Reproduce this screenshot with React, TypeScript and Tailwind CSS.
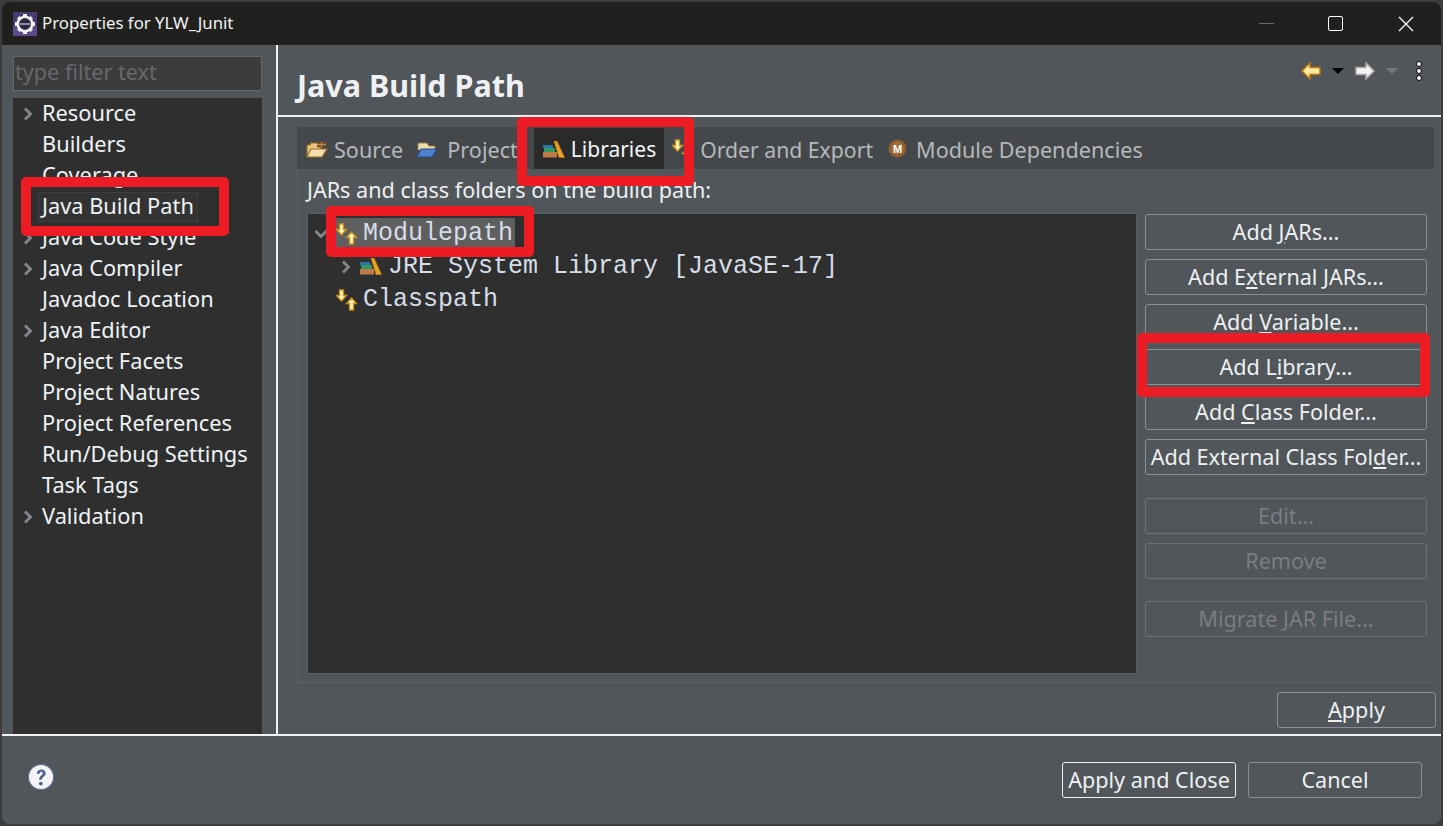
import type { ReactNode } from "react"

const sans = "font-['Noto_Sans','Open_Sans',sans-serif]"

const treeItems = [
  { label: "Resource", arrow: true },
  { label: "Builders" },
  { label: "Coverage" },
  { label: "Java Build Path", selected: true },
  { label: "Java Code Style", arrow: true },
  { label: "Java Compiler", arrow: true },
  { label: "Javadoc Location" },
  { label: "Java Editor", arrow: true },
  { label: "Project Facets" },
  { label: "Project Natures" },
  { label: "Project References" },
  { label: "Run/Debug Settings" },
  { label: "Task Tags" },
  { label: "Validation", arrow: true },
]

function Chevron({ down = false }: { down?: boolean }) {
  return (
    <svg width="12" height="14" viewBox="0 0 12 14" className={down ? "rotate-90" : ""}>
      <path d="M3 1.500l5.500 5.500L3 12.500" fill="none" stroke="#85888a" strokeWidth="2.800" />
    </svg>
  )
}

function AppIcon() {
  return (
    <svg width="24" height="24" viewBox="0 0 24 24">
      <rect width="24" height="24" fill="#4a3a72" />
      <rect x="0" y="14" width="24" height="10" fill="#5c4a8c" />
      <path d="M10 2h4v3h-4zM10 19h4v3h-4zM2 10h3v4H2zM19 10h3v4h-3zM4 6.500L6.500 4 9 6.500 6.500 9zM15 6.500L17.500 4 20 6.500 17.500 9zM4 17.500L6.500 15 9 17.500 6.500 20zM15 17.500L17.500 15 20 17.500 17.500 20z" fill="#f0f0f0" />
      <circle cx="12" cy="12" r="7.200" fill="none" stroke="#f0f0f0" strokeWidth="2.800" />
      <circle cx="12" cy="12" r="5.800" fill="#2e2a3c" />
      <rect x="6.500" y="11" width="11" height="2" fill="#8f8aa8" />
    </svg>
  )
}

function BooksIcon() {
  return (
    <svg width="22" height="17" viewBox="0 0 22 17" className="shrink-0">
      <rect x="0" y="4" width="10" height="3" fill="#2c74a8" />
      <rect x="1" y="7" width="11" height="4" fill="#2f9a66" />
      <rect x="0" y="11" width="14" height="5.500" fill="#c07a45" />
      <path d="M11 0h3l7.500 16.500H16z" fill="#e3a526" stroke="#c8701a" strokeWidth="0.800" />
    </svg>
  )
}

function SortIcon() {
  return (
    <svg width="24" height="22" viewBox="0 0 24 22" className="shrink-0">
      <path d="M3.500 1h4v5.500h3L5.500 12 .5 6.500h3z" fill="#fff2bd" stroke="#c8921a" strokeWidth="1.300" />
      <path d="M15.500 9l5 5.500h-3V21h-4v-6.500h-3z" fill="#fff2bd" stroke="#c8921a" strokeWidth="1.300" />
    </svg>
  )
}

function SourceFolderIcon() {
  return (
    <svg width="22" height="18" viewBox="0 0 22 18" className="shrink-0">
      <path d="M1 16V4h3l1-2h7v4h3v2" fill="#e9c67c" stroke="#9a6a28" strokeWidth="1.200" />
      <path d="M1 16l4-8h16l-5 8z" fill="#f3dfae" stroke="#9a6a28" strokeWidth="1.200" />
      <rect x="11" y="1" width="9" height="5" fill="#7a4f2a" />
      <path d="M15.500 1v5M11 3.500h9" stroke="#c9a06a" strokeWidth="0.800" />
    </svg>
  )
}

function ProjectFolderIcon() {
  return (
    <svg width="22" height="18" viewBox="0 0 22 18" className="shrink-0">
      <path d="M2 9V2h9l2 3h6v4" fill="#f0dfa8" stroke="#8a7a50" strokeWidth="1" />
      <path d="M1 16l4-8h16l-5 8z" fill="#4f7fd0" stroke="#274a8a" strokeWidth="1.200" />
    </svg>
  )
}

function ModuleIcon() {
  return (
    <svg width="19" height="19" viewBox="0 0 19 19" className="mb-[4px] shrink-0">
      <circle cx="9.500" cy="9.500" r="9" fill="#8f5f30" />
      <circle cx="9.500" cy="9.500" r="6.500" fill="#a06c38" />
      <text x="9.500" y="13.500" textAnchor="middle" fontSize="11" fontWeight="700" fill="#fff" fontFamily="Liberation Sans, sans-serif">M</text>
    </svg>
  )
}

function HelpIcon() {
  return (
    <svg width="28" height="28" viewBox="0 0 30 30" className="mb-[6px]">
      <circle cx="15" cy="15" r="13.500" fill="#f4f4f6" stroke="#5a6c96" strokeWidth="1.200" />
      <path d="M10.500 11.500c0-6 9.500-6 9.500-.5 0 3.500-4 3.500-4 7h-3c0-4.500 3.800-4.500 3.800-7 0-2.200-3.300-2-3.300.5z" fill="#4d5f8a" />
      <circle cx="14.800" cy="22" r="2" fill="#4d5f8a" />
    </svg>
  )
}

function PushButton({ children, disabled, focused, className = "" }: { children: ReactNode; disabled?: boolean; focused?: boolean; className?: string }) {
  return (
    <div
      className={`flex h-9 items-center justify-center whitespace-nowrap rounded-[3px] border text-[21.6px] leading-none ${
        disabled ? "border-[#6e7275] text-[#7a7e81]" : focused ? "border-[#f0f0f0] text-[#eef0f2]" : "border-[#8b8f92] text-[#eef0f2]"
      } ${className}`}
    >
      <span>{children}</span>
    </div>
  )
}

function RedBox({ className }: { className: string }) {
  return <div className={`pointer-events-none absolute rounded-[5px] border-[10px] border-[#ed1c24] ${className}`} />
}

export default function App() {
  return (
    <div className={`relative flex h-[826px] w-[1443px] flex-col overflow-hidden bg-[#3b3c3d] p-[2px] ${sans}`}>
      <div className="flex min-h-0 flex-1 flex-col overflow-hidden rounded-lg bg-[#505659]">
        <div className="flex h-[43px] shrink-0 items-center bg-[#20211f] pl-[11px]">
          <AppIcon />
          <span className="ml-[5px] text-[16.8px] leading-none text-[#f2f2f2]">Properties for YLW_Junit</span>
          <div className="ml-auto flex items-center">
            <div className="mr-[54px] h-px w-[15px] bg-[#6b6c6c]" />
            <div className="mr-[55px] h-[15px] w-[15px] rounded-[2px] border-[1.500px] border-white" />
            <svg width="16" height="16" viewBox="0 0 16 16" className="mr-[27px]">
              <path d="M1 1l14 14M15 1L1 15" stroke="#fff" strokeWidth="1.300" />
            </svg>
          </div>
        </div>

        <div className="flex min-h-0 flex-1">
          <div className="flex w-[274px] shrink-0 flex-col pl-[11px] pr-[14px] pt-[11px]">
            <div className="flex h-[35px] shrink-0 items-center border border-[#63676a] bg-[#3b3c3e] pb-[3px] pl-[1px] text-[21.6px] text-[#66696b]">type filter text</div>
            <div className="mt-[7px] flex-1 bg-[#2f2f2f]">
              {treeItems.map((item) => (
                <div key={item.label} className="flex h-[31px] items-center text-[21.8px] leading-none text-[#eef3f6]">
                  <div className="flex w-[29px] justify-end pr-[8px]">{item.arrow && <Chevron />}</div>
                  {item.selected ? (
                    <span className="-ml-[4px] flex h-[30px] items-center border border-[#3e3e3e] bg-[#333333] px-[3px] pb-[1px]">{item.label}</span>
                  ) : (
                    <span className="pb-[1px]">{item.label}</span>
                  )}
                </div>
              ))}
            </div>
          </div>

          <div className="flex min-w-0 flex-1 flex-col border-l-2 border-[#f2f2f2]">
            <div className="flex h-[72px] shrink-0 items-center justify-between border-b-2 border-[#f2f2f2] pl-[19px] pt-[10px]">
              <h1 className="text-[30.5px] font-bold leading-none text-[#eef0f2]">Java Build Path</h1>
              <div className="mb-[28px] mr-[19px] flex items-center">
                <svg width="20" height="18" viewBox="0 0 20 18">
                  <path d="M1 9l8-8v4.500h10v7H9V17z" fill="#ffe9a0" stroke="#b8760b" strokeWidth="1.500" />
                </svg>
                <svg width="12" height="6" viewBox="0 0 12 6" className="ml-[11px]">
                  <path d="M0 0h12L6 6z" fill="#000" />
                </svg>
                <svg width="20" height="18" viewBox="0 0 20 18" className="ml-[11px]">
                  <path d="M19 9l-8-8v4.500H1v7h10V17z" fill="#f4f4f4" stroke="#a8a8a8" strokeWidth="1.500" />
                </svg>
                <svg width="12" height="6" viewBox="0 0 12 6" className="ml-[11px]">
                  <path d="M0 0h12L6 6z" fill="#74787a" />
                </svg>
                <div className="ml-[18px] flex flex-col gap-[1px]">
                  <div className="h-[6px] w-[6px] rounded-full border border-black bg-white" />
                  <div className="h-[6px] w-[6px] rounded-full border border-black bg-white" />
                  <div className="h-[6px] w-[6px] rounded-full border border-black bg-white" />
                </div>
              </div>
            </div>

            <div className="ml-[19px] mr-[7px] mt-[10px] flex h-[42px] shrink-0 items-center bg-[#45484b] pt-[4px] text-[21.6px] leading-none text-[#b4b9bc]">
              <div className="ml-[9px] flex items-center gap-[6px]"><SourceFolderIcon /><span>Source</span></div>
              <div className="ml-[13px] flex items-center gap-[9px]"><ProjectFolderIcon /><span>Project</span></div>
              <div className="ml-[16px] flex h-[41px] items-center gap-[6px] self-end bg-[#2a2a2a] pl-[9px] pr-[8px] pt-[2px] text-[21px] text-[#f4f6f8]"><BooksIcon /><span>Libraries</span></div>
              <div className="ml-[8px] flex items-center gap-[4px] text-[21.2px]"><SortIcon /><span>Order and Export</span></div>
              <div className="ml-[15px] flex items-center gap-[9px]"><ModuleIcon /><span>Module Dependencies</span></div>
            </div>

            <div className="ml-[19px] mr-[7px] flex min-h-0 flex-1 flex-col border-b border-l border-[#5e6265] pl-[9px] pr-[8px]">
              <div className="flex h-[44px] shrink-0 items-center pb-[2px] text-[21.6px] leading-none text-[#eef0f2]">JARs and class folders on the build path:</div>
              <div className="flex min-h-0 flex-1 gap-[8px] pb-[8px]">
                <div className="w-[830px] shrink-0 border border-[#5c5f62] bg-[#2f2f2f] pt-[3px] font-['Liberation_Mono',monospace] text-[25px] leading-none text-[#d5dee8]">
                  <div className="flex h-[33px] items-center pl-[7px]">
                    <Chevron down />
                    <div className="ml-[9px] flex h-[31px] items-center gap-[3px] bg-[#5f5f5f] pr-[2px]"><SortIcon /><span>Modulepath</span></div>
                  </div>
                  <div className="flex h-[33px] items-center pl-[32px]">
                    <Chevron />
                    <div className="ml-[8px]"><BooksIcon /></div>
                    <span className="ml-[6px]">JRE System Library [JavaSE-17]</span>
                  </div>
                  <div className="flex h-[33px] items-center gap-[3px] pl-[28px]"><SortIcon /><span>Classpath</span></div>
                </div>
                <div className="flex w-[282px] shrink-0 flex-col pt-[1px]">
                  <div className="flex flex-col gap-[9px]">
                    <PushButton>Add <u>J</u>ARs...</PushButton>
                    <PushButton>Add E<u>x</u>ternal JARs...</PushButton>
                    <PushButton>Add <u>V</u>ariable...</PushButton>
                    <PushButton>Add L<u>i</u>brary...</PushButton>
                    <PushButton>Add <u>C</u>lass Folder...</PushButton>
                    <PushButton>Add External Class Fol<u>d</u>er...</PushButton>
                  </div>
                  <div className="mt-[23px] flex flex-col gap-[9px]">
                    <PushButton disabled>Edit...</PushButton>
                    <PushButton disabled>Remove</PushButton>
                  </div>
                  <PushButton disabled className="mt-[22px]">Migrate JAR File...</PushButton>
                </div>
              </div>
            </div>

            <div className="flex h-[51px] shrink-0 items-center justify-end pr-[5px] pt-[2px]">
              <PushButton className="w-[159px]"><u>A</u>pply</PushButton>
            </div>
          </div>
        </div>

        <div className="flex h-[90px] shrink-0 items-center border-t-2 border-[#f2f2f2] pl-[25px] pr-[19px]">
          <HelpIcon />
          <div className="ml-auto flex gap-[12px]">
            <PushButton focused className="w-[174px]">Apply and Close</PushButton>
            <PushButton className="w-[174px]">Cancel</PushButton>
          </div>
        </div>
      </div>

      <RedBox className="left-[21px] top-[177px] h-[59px] w-[208px]" />
      <RedBox className="left-[517px] top-[117px] h-[69px] w-[177px]" />
      <RedBox className="left-[326px] top-[206px] h-[51px] w-[208px]" />
      <RedBox className="left-[1137px] top-[333px] h-[64px] w-[293px]" />
    </div>
  )
}
